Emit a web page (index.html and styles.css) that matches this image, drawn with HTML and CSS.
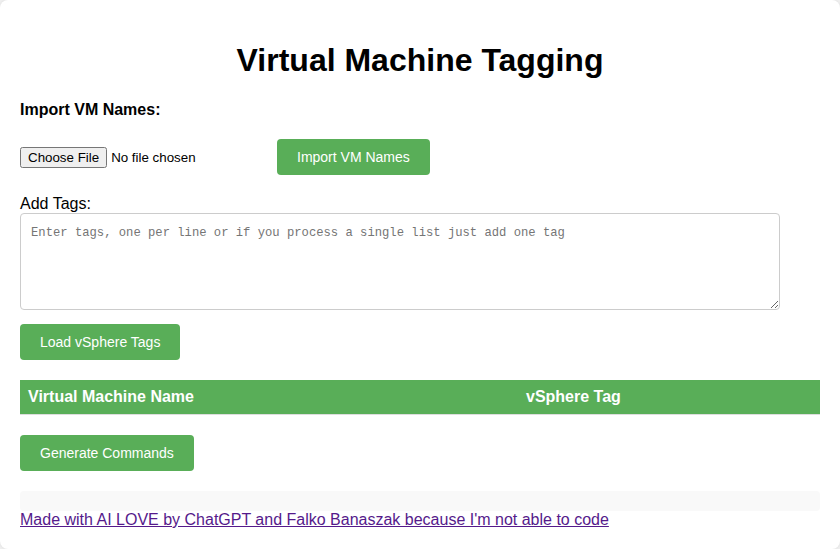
FILE: index.html
```html
<!DOCTYPE html>
<html>
<head>
<meta charset="utf-8">
<title>Virtual Machine Tagging</title>
<link rel="stylesheet" href="styles.css">
</head>
<body>
<div class="container">
  <h1 class="title">Virtual Machine Tagging</h1>
  <label class="section-label" for="vmFile">Import VM Names:</label>
  <div class="import-row">
    <input type="file" id="vmFile" class="file-input">
    <button class="btn">Import VM Names</button>
  </div>
  <label class="tags-label" for="tags">Add Tags:</label>
  <textarea id="tags" class="tags-input" placeholder="Enter tags, one per line or if you process a single list just add one tag"></textarea>
  <div class="load-row"><button class="btn">Load vSphere Tags</button></div>
  <table class="vm-table">
    <thead>
      <tr><th class="col-name">Virtual Machine Name</th><th class="col-tag">vSphere Tag</th></tr>
    </thead>
  </table>
  <div class="gen-row"><button class="btn">Generate Commands</button></div>
  <div class="output"></div>
  <a class="credit" href="#">Made with AI LOVE by ChatGPT and Falko Banaszak because I'm not able to code</a>
</div>
</body>
</html>
```
FILE: styles.css
```css
html, body {
  margin: 0;
  padding: 0;
}
body {
  background: #f4f4f4;
  font-family: "Liberation Sans", Arial, sans-serif;
  color: #000;
}
.container {
  width: 800px;
  padding: 20px;
  margin: 0 auto;
  background: #fff;
  border-radius: 8px;
  box-shadow: 0 0 6px rgba(0, 0, 0, 0.12);
  display: flex;
  flex-direction: column;
  align-items: flex-start;
}
.title {
  align-self: stretch;
  text-align: center;
  font-size: 32px;
  line-height: 37px;
  margin: 22px 0 22px;
  font-weight: bold;
}
.section-label {
  font-weight: bold;
  font-size: 16px;
  line-height: 18px;
}
.import-row {
  margin-top: 20px;
  display: flex;
  align-items: center;
  gap: 4px;
}
.file-input {
  width: 253px;
  margin: 0;
  font-family: "Liberation Sans", Arial, sans-serif;
  font-size: 13.333px;
}
.btn {
  background: #59ae58;
  color: #fff;
  border: none;
  border-radius: 4px;
  padding: 10px 20px;
  font-family: "Liberation Sans", Arial, sans-serif;
  font-size: 14px;
  line-height: 16px;
  cursor: pointer;
}
.tags-label {
  margin-top: 19px;
  font-size: 16px;
  line-height: 19px;
}
.tags-input {
  box-sizing: border-box;
  width: 760px;
  height: 97px;
  margin: 0;
  padding: 11px 10px 10px;
  border: 1px solid #ccc;
  border-radius: 4px;
  font-family: "Liberation Mono", "DejaVu Sans Mono", monospace;
  font-size: 12.2px;
  line-height: 17px;
}
.tags-input::placeholder {
  color: #757575;
}
.load-row {
  margin-top: 14px;
}
.vm-table {
  margin-top: 20px;
  width: 800px;
  border-collapse: collapse;
}
.vm-table th {
  background: #59ae58;
  color: #fff;
  text-align: left;
  font-size: 16px;
  line-height: 18px;
  padding: 8px;
  border-bottom: 1px solid #ddd;
}
.col-name {
  width: 482px;
}
.gen-row {
  margin-top: 20px;
}
.output {
  margin-top: 20px;
  align-self: stretch;
  height: 20px;
  background: #f9f9f9;
  border-radius: 4px;
}
.credit {
  color: #551a8b;
  font-size: 16px;
  line-height: 18px;
  text-decoration: underline;
}
```
